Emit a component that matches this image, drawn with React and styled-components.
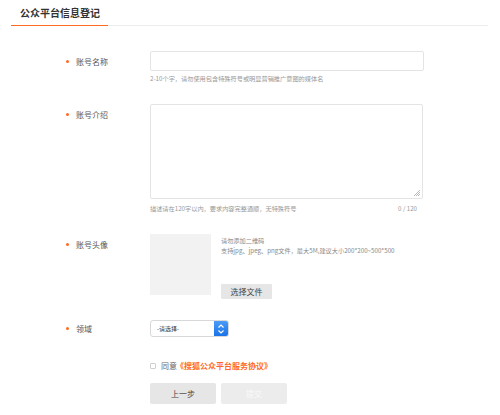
import styled, { createGlobalStyle } from 'styled-components';

const GlobalStyle = createGlobalStyle`
  html, body {
    margin: 0;
    padding: 0;
    background: #fff;
  }
  body {
    font-family: "Noto Sans CJK SC", "Liberation Sans", sans-serif;
    color: #555;
  }
`;

const ORANGE = '#ff6a1f';

const Page = styled.div`
  width: 500px;
  height: 415px;
  box-sizing: border-box;
  padding: 0 12px 0 11px;
  overflow: hidden;
`;

const Header = styled.div`
  display: flex;
  border-bottom: 1px solid #ececec;
  height: 25px;
`;

const Title = styled.h1`
  margin: 0;
  width: 97px;
  box-sizing: border-box;
  padding: 0 0 0 9px;
  font-size: 10px;
  line-height: 25px;
  font-weight: 700;
  color: #333;
  border-bottom: 1px solid ${ORANGE};
  margin-bottom: -1px;
  white-space: nowrap;
`;

const Form = styled.div`
  display: flex;
  flex-direction: column;
  gap: 21px;
  padding-top: 25px;
`;

const Row = styled.div`
  display: grid;
  grid-template-columns: 139px 1fr;
  margin-top: ${({ $offset }) => $offset || 0}px;
`;

const Label = styled.div`
  display: flex;
  align-items: center;
  gap: 7px;
  padding-left: 55px;
  height: ${({ $h }) => $h || 20}px;
  font-size: 8px;
  color: #555;
  white-space: nowrap;

  &::before {
    content: '';
    width: 3px;
    height: 3px;
    background: ${ORANGE};
    border-radius: 50%;
  }
`;

const Field = styled.div`
  display: flex;
  flex-direction: column;
`;

const TextInput = styled.div`
  width: 274px;
  height: 20px;
  box-sizing: border-box;
  border: 1px solid #e4e4e4;
  border-radius: 2px;
  background: #fff;
`;

const TextArea = styled.div`
  position: relative;
  width: 273px;
  height: 95px;
  box-sizing: border-box;
  border: 1px solid #e4e4e4;
  border-radius: 2px;
`;

const Grip = styled.svg`
  position: absolute;
  right: 1px;
  bottom: 1px;
`;

const Hint = styled.div`
  display: flex;
  justify-content: space-between;
  width: ${({ $w }) => ($w ? `${$w}px` : 'auto')};
  margin-top: ${({ $mt }) => $mt || 4}px;
  font-size: 6.2px;
  line-height: 8px;
  color: #999;
  white-space: nowrap;
`;

const Counter = styled.span`
  padding-right: 6px;
`;

const AvatarWrap = styled.div`
  display: flex;
  gap: 10px;
`;

const AvatarBox = styled.div`
  width: 61px;
  height: 61px;
  background: #f2f2f2;
`;

const AvatarInfo = styled.div`
  display: flex;
  flex-direction: column;
  padding-top: 2px;
  height: 65px;
  box-sizing: border-box;
`;

const InfoLine = styled.div`
  font-size: 6.2px;
  line-height: 10px;
  color: #888;
  white-space: nowrap;
`;

const FileButton = styled.button`
  margin-top: auto;
  width: 51px;
  height: 15px;
  border: none;
  border-radius: 1px;
  background: #e6e6e6;
  color: #444;
  font-family: inherit;
  font-size: 8px;
  padding: 0;
`;

const Select = styled.div`
  display: flex;
  width: 79px;
  height: 17px;
  box-sizing: border-box;
  border: 1px solid #d8d8d8;
  border-radius: 3px;
  overflow: hidden;
`;

const SelectText = styled.span`
  flex: 1;
  padding-left: 6px;
  font-size: 6px;
  line-height: 15px;
  color: #333;
`;

const SelectArrows = styled.span`
  display: flex;
  align-items: center;
  justify-content: center;
  width: 14px;
  background: linear-gradient(#4a9cf7, #1a73e8);
`;

const Agree = styled.div`
  display: flex;
  align-items: center;
  gap: 5px;
  height: 9px;
  font-size: 8px;
  color: #666;
  white-space: nowrap;
`;

const Check = styled.span`
  width: 4px;
  height: 4px;
  border: 1px solid #cfcfcf;
  border-radius: 1px;
`;

const Link = styled.span`
  color: ${ORANGE};
  font-weight: 700;
  margin-left: -1px;
`;

const Buttons = styled.div`
  display: flex;
  gap: 5px;
`;

const ActionButton = styled.button`
  width: 66px;
  height: 21px;
  border: none;
  border-radius: 2px;
  padding: 0;
  font-family: inherit;
  font-size: 8px;
  background: ${({ $disabled }) => ($disabled ? '#ececec' : '#e6e6e6')};
  color: ${({ $disabled }) => ($disabled ? '#fafafa' : '#444')};
`;

export default function App() {
  return (
    <>
      <GlobalStyle />
      <Page>
        <Header>
          <Title>公众平台信息登记</Title>
        </Header>
        <Form>
          <Row>
            <Label>账号名称</Label>
            <Field>
              <TextInput />
              <Hint>2-10个字，请勿使用包含特殊符号或明显营销推广意图的媒体名</Hint>
            </Field>
          </Row>

          <Row>
            <Label>账号介绍</Label>
            <Field>
              <TextArea>
                <Grip width="8" height="8" viewBox="0 0 8 8">
                  <path d="M7 1L1 7M7 3L3 7M7 5L5 7" stroke="#aaa" strokeWidth="0.8" />
                </Grip>
              </TextArea>
              <Hint $w={273} $mt={6}>
                <span>描述请在120字以内，要求内容完整通顺，无特殊符号</span>
                <Counter>0 / 120</Counter>
              </Hint>
            </Field>
          </Row>

          <Row>
            <Label>账号头像</Label>
            <AvatarWrap>
              <AvatarBox />
              <AvatarInfo>
                <InfoLine>请勿添加二维码</InfoLine>
                <InfoLine>支持jpg、jpeg、png文件，最大5M,建议大小200*200~500*500</InfoLine>
                <FileButton>选择文件</FileButton>
              </AvatarInfo>
            </AvatarWrap>
          </Row>

          <Row>
            <Label $h={17}>领域</Label>
            <Select>
              <SelectText>-请选择-</SelectText>
              <SelectArrows>
                <svg width="8" height="12" viewBox="0 0 8 12">
                  <path d="M1.5 4.5L4 2L6.5 4.5M1.5 7.5L4 10L6.5 7.5" stroke="#fff" strokeWidth="1.2" fill="none" />
                </svg>
              </SelectArrows>
            </Select>
          </Row>

          <Row $offset={3}>
            <div />
            <Agree>
              <Check />
              <span>
                同意<Link>《搜狐公众平台服务协议》</Link>
              </span>
            </Agree>
          </Row>

          <Row $offset={-8}>
            <div />
            <Buttons>
              <ActionButton>上一步</ActionButton>
              <ActionButton $disabled>提交</ActionButton>
            </Buttons>
          </Row>
        </Form>
      </Page>
    </>
  );
}
